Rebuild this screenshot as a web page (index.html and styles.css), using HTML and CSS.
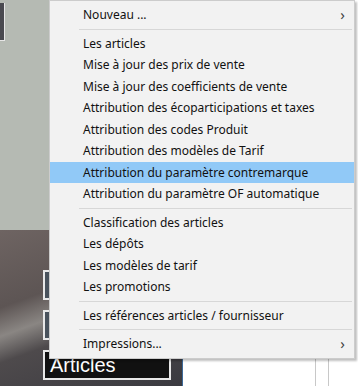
FILE: index.html
```html
<!DOCTYPE html>
<html lang="fr">
<head>
    <meta charset="UTF-8">
    <title>Articles - menu</title>
    <link rel="stylesheet" href="styles.css">
</head>
<body>

<div class="screen">
    <div class="side">
        <div class="side-top">
            <div class="tile"></div>
        </div>
        <div class="side-bottom">
            <div class="tile-btn"></div>
            <div class="tile-btn"></div>
            <div class="tile-btn">Articles</div>
        </div>
    </div>
    <div class="main">
        <div class="col-line"></div>
        <div class="col-line"></div>
    </div>

    <!-- context menu over the window -->
    <ul class="menu">
        <li class="item has-sub">Nouveau ...<span class="chev">&#8250;</span></li>
        <li class="sep"></li>
        <li class="item">Les articles</li>
        <li class="item">Mise à jour des prix de vente</li>
        <li class="item">Mise à jour des coefficients de vente</li>
        <li class="item">Attribution des écoparticipations et taxes</li>
        <li class="item">Attribution des codes Produit</li>
        <li class="item">Attribution des modèles de Tarif</li>
        <li class="item active">Attribution du paramètre contremarque</li>
        <li class="item">Attribution du paramètre OF automatique</li>
        <li class="sep"></li>
        <li class="item">Classification des articles</li>
        <li class="item">Les dépôts</li>
        <li class="item">Les modèles de tarif</li>
        <li class="item">Les promotions</li>
        <li class="sep"></li>
        <li class="item">Les références articles / fournisseur</li>
        <li class="sep"></li>
        <li class="item has-sub">Impressions...<span class="chev">&#8250;</span></li>
    </ul>
</div>

</body>
</html>
```

FILE: styles.css
```css
body {
    margin: 0;
    background-color: #ffffff;
    font-family: 'Noto Sans', sans-serif;
}

.screen {
    position: relative;
    display: flex;
    width: 358px;
    height: 386px;
    overflow: hidden;
}

/* left panel of the app window */
.side {
    display: flex;
    flex-direction: column;
    width: 182px;
    border-right: 1px solid #3d6a9a;
}

.side-top {
    height: 230px;
    background-color: #b5bab3; /* grey-green backdrop */
    padding-top: 3px;
    box-sizing: border-box;
}

.tile {
    width: 4px;
    height: 37px;
    background-color: #4a4a50;
    border-right: 1px solid #e6e6e6;
    border-bottom: 1px solid #e6e6e6;
}

.side-bottom {
    flex: 1;
    display: flex;
    flex-direction: column;
    gap: 10px;
    padding: 40px 0 0 43px;
    background: linear-gradient(160deg, #6e6462 0%, #5d5554 35%, #8a8683 48%, #4e4a4c 60%, #3a3a40 100%);
}

.tile-btn {
    width: 119px;
    height: 26px;
    border: 2px solid #e8e8e8;
    background-color: #49525c;
    color: #ffffff;
    font-family: 'Liberation Sans', Arial, sans-serif;
    font-size: 20px;
    line-height: 27px;
    padding-left: 5px;
    box-sizing: content-box;
}

.tile-btn:last-child {
    background-color: #111111;
}

.main {
    flex: 1;
    display: flex;
    gap: 12px;
    padding-left: 132px;
    background-color: #ffffff;
}

.col-line {
    width: 1px;
    background-color: #c8c8c8;
}

/* popup menu */
.menu {
    position: absolute;
    left: 49px;
    top: 0;
    width: 304px;
    margin: 0;
    padding: 3px 0 3px 0;
    list-style: none;
    background-color: #f2f2f2;
    border: 1px solid #cccccc;
    box-shadow: 2px 2px 2px rgba(0, 0, 0, 0.25);
    font-size: 12px;
    color: #111111;
}

.item {
    position: relative;
    height: 21.5px;
    line-height: 21px;
    padding-left: 33px;
    white-space: nowrap;
}

.item.active {
    background-color: #91c9f7; /* hover blue */
}

.chev {
    position: absolute;
    right: 9px;
    top: 0;
    font-size: 15px;
    color: #444444;
}

.sep {
    height: 1px;
    margin: 3px 2px 3px 29px;
    background-color: #d7d7d7;
}
```
